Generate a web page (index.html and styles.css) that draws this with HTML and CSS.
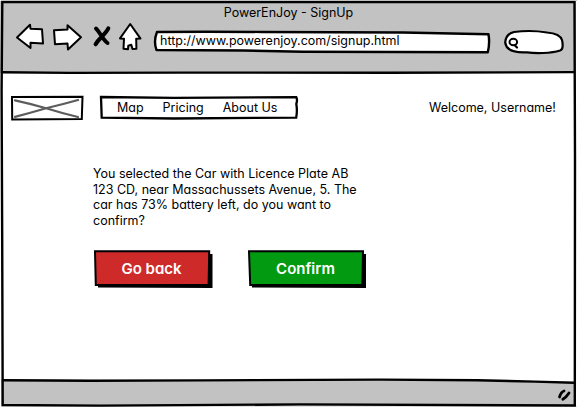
FILE: index.html
```html
<!DOCTYPE html>
<html lang="en">
<head>
<meta charset="utf-8">
<title>PowerEnJoy - SignUp</title>
<link rel="stylesheet" href="styles.css">
</head>
<body>
<div class="window">
  <header class="chrome">
    <div class="title"><span class="t-title">PowerEnJoy - SignUp</span></div>
    <div class="toolbar">
      <svg class="tools" viewBox="0 0 130 32" width="130" height="32">
        <g fill="#fff" stroke="#000" stroke-width="2" stroke-linejoin="round">
          <path d="M2 15.5 L15 2.7 L15.5 6.7 L27 7.2 L28 21.5 L15.5 20.8 L15.5 26 Z"/>
          <path d="M39 8.2 L52.5 7.5 L52.5 3.2 L66 15.3 L53 27.5 L52.5 21.5 L40 22.2 Z"/>
          <path d="M115.2 2 L105 16.4 L109 16.8 L108.5 26.8 L113 27.2 L113.3 23.7 L116.3 22.8 L117.5 27 L121.4 26.8 L121.2 16.8 L125.5 16.6 Z"/>
        </g>
        <path d="M81 6.5 C85 10 87 17 92.5 21 M93.3 6.3 C90 13 84 16 80.6 22.3" fill="none" stroke="#000" stroke-width="4" stroke-linecap="round"/>
      </svg>
      <div class="url">
        <svg class="sketch" viewBox="0 0 338 24" width="338" height="24"><path d="M4 2 Q50 1.4 110 2 L250 2.5 L335.5 4.2 Q337 13 334.8 22.3 L150 21.8 L90 20.5 L3.5 20 Q.3 11 4 2 Z" fill="#fff" stroke="#000" stroke-width="2.4" stroke-linejoin="round"/></svg>
        <span class="t-url">http://www.powerenjoy.com/signup.html</span>
      </div>
      <svg class="search" viewBox="0 0 62 26" width="62" height="26">
        <path d="M11 3 Q28 .8 44 3.5 Q57 4.5 59 11 Q61 20 57 21.5 C48 24.5 32 24.5 24 23.3 C10 24 3 20 2.2 13.5 Q2.7 5 11 3 Z" fill="#fff" stroke="#000" stroke-width="2.2"/>
        <ellipse cx="10.3" cy="13" rx="3.8" ry="3.2" fill="none" stroke="#000" stroke-width="2"/>
        <path d="M12 16.5 L14 18.5" stroke="#000" stroke-width="2.2" stroke-linecap="round"/>
      </svg>
    </div>
  </header>
  <main class="page">
    <div class="topbar">
      <svg class="logo" viewBox="0 0 74 26" width="74" height="26">
        <path d="M2 2 L72.5 1.8 L71.8 24 L2.2 24.4 Z" fill="#fff" stroke="#000" stroke-width="2"/>
        <path d="M5 5.3 Q22 9 37 13.5 Q53 18.5 68 22 M5 21.8 Q20 18 37 13 Q54 9 68 5" fill="none" stroke="#5d5d5d" stroke-width="2.3" stroke-linecap="round"/>
      </svg>
      <nav class="nav">
        <svg class="sketch" viewBox="0 0 200 26" width="200" height="26"><path d="M2 2 L75 2.8 L197.3 2.2 Q198.7 5 197.3 9 Q198.5 15 197.2 22.6 L75 23.5 L2.7 22.6 Z" fill="#fff" stroke="#000" stroke-width="2.3"/></svg>
        <span class="t-map">Map</span><span class="t-pricing">Pricing</span><span class="t-about">About Us</span>
      </nav>
      <span class="welcome t-welcome">Welcome, Username!</span>
    </div>
    <p class="message"><span class="t-l1">You selected the Car with Licence Plate AB</span><br><span class="t-l2">123 CD, near Massachussets Avenue, 5. The</span><br><span class="t-l3">car has 73% battery left, do you want to</span><br><span class="t-l4">confirm?</span></p>
    <div class="actions">
      <button class="btn">
        <svg class="sketch" viewBox="0 0 120 40" width="120" height="40"><path d="M5 5 H119.5 V39 L5 38.5 Z"/><path d="M2 2.3 L116.2 2.3 L115.6 35.8 L2.8 36 Z" fill="#cf2a2a" stroke="#000" stroke-width="2"/></svg>
        <span class="t-back">Go back</span>
      </button>
      <button class="btn">
        <svg class="sketch" viewBox="0 0 120 40" width="120" height="40"><path d="M5 5 H119 V39 L5 38.5 Z"/><path d="M2 2.3 L116 2.3 L115.3 35.8 L3.2 36 Z" fill="#029a11" stroke="#000" stroke-width="2"/></svg>
        <span class="t-confirm">Confirm</span>
      </button>
    </div>
  </main>
  <footer class="status">
    <svg class="grip" viewBox="0 0 20 16" width="20" height="16"><path d="M3.5 11 Q6 6.5 10 4.2 M7 13.5 Q13 10.5 16 5.8" fill="none" stroke="#000" stroke-width="3" stroke-linecap="round"/></svg>
  </footer>
  <svg class="frame" viewBox="0 0 577 408" width="577" height="408">
    <path d="M1 379 V407 H577 V384 L565 382 L477 380.5 L150 380.3 Z" fill="#c2c2c2"/>
    <path d="M0 0 H577 V1 H0 Z M576 0 V408 H577 V0 Z M0 0 V92 H1 V408 H0 Z M0 406.6 H577 V408 H0 Z" fill="#fff"/>
    <g fill="none" stroke="#000" stroke-width="2.4">
      <path d="M2.3 2 L574.5 2 L575 160 L574.8 405.5 L300 404.4 L100 405.6 L2.7 405 L2.2 240 L1.6 90 Z"/>
      <path d="M2 72.2 L70 72.9 L180 72.6 L390 72.8 L574 72.1"/>
      <path d="M3 380.2 L90 380.8 L200 380.4 L380 379.6 L477 380.2 L535 381.6 L574 382.7"/>
    </g>
    <path d="M559.5 397 Q561 392 564 391 M562.8 399.2 Q566.5 397 569 393" fill="none" stroke="#000" stroke-width="2.8" stroke-linecap="round"/>
  </svg>
</div>
</body>
</html>
```
FILE: styles.css
```css
* { box-sizing: border-box; }
body {
  margin: 0;
  background: #fff;
  color: #000;
  font: 12.5px/16px Inter, "Open Sans", sans-serif;
  font-feature-settings: "cv11" 1;
}
.window {
  position: relative;
  display: flex;
  flex-direction: column;
  width: 577px;
  height: 408px;
  overflow: hidden;
}
.chrome { height: 73px; background: #c2c2c2; }
.title { height: 22px; padding-top: 5px; text-align: center; }
.toolbar { display: flex; padding-left: 15px; }
.tools { display: block; }
.url {
  position: relative;
  width: 338px;
  height: 24px;
  margin: 8px 0 0 8px;
  padding: 3px 0 0 7px;
}
.sketch { position: absolute; left: 0; top: 0; }
.url span, .nav span, .btn span { position: relative; white-space: nowrap; }
.search { margin: 7px 0 0 12px; }
.page { flex: 1; padding-top: 22px; }
.topbar { display: flex; padding-left: 10px; height: 28px; }
.nav {
  position: relative;
  display: flex;
  width: 200px;
  height: 26px;
  margin-left: 15px;
  padding: 5px 0 0 18px;
  gap: 19px;
}
.welcome { margin: 5px 0 0 130px; white-space: nowrap; }
.message { margin: 43px 0 0 93px; line-height: 15.6px; white-space: nowrap; }
.actions { display: flex; gap: 34px; margin: 21px 0 0 93px; }
.btn {
  position: relative;
  width: 120px;
  height: 40px;
  padding: 0 3px 1px 0;
  border: 0;
  background: none;
  color: #fff;
  font: 600 15px/20px Inter, "Open Sans", sans-serif;
  font-feature-settings: "cv11" 1;
}
.status { height: 27px; }
.grip { display: none; }
.frame { position: absolute; left: 0; top: 0; pointer-events: none; }
```
